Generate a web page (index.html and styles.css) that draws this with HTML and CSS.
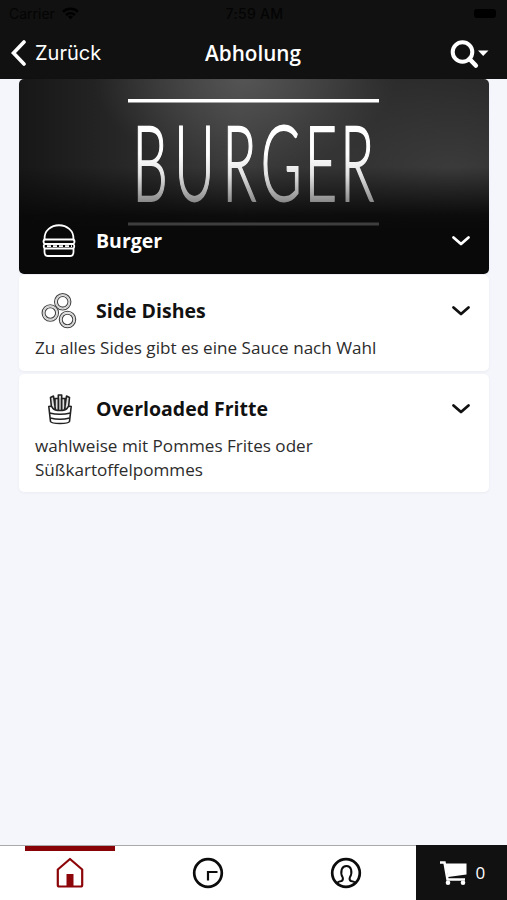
FILE: index.html
```html
<!DOCTYPE html>
<html lang="de">
<head>
<meta charset="utf-8">
<title>Abholung</title>
<link rel="stylesheet" href="styles.css">
</head>
<body>
<header class="header">
  <div class="status">
    <div class="carrier">Carrier
      <svg width="17" height="13" viewBox="0 0 17 13"><g fill="none" stroke="#000" stroke-width="2.4"><path d="M1 4.8C5.300 .8 11.700 .8 16 4.800"/><path d="M4 8c2.600-2.400 6.400-2.400 9 0"/></g><path d="M6 9.500q2.500-2 5 0L8.500 12.500z"/></svg>
    </div>
    <div class="time">7:59 AM</div>
    <div class="battery"><span class="cell"></span></div>
  </div>
  <nav class="nav">
    <div class="back">
      <svg width="15" height="26" viewBox="0 0 15 26"><path d="M13 2 2.500 13 13 24" fill="none" stroke="#fff" stroke-width="3.600" stroke-linecap="round"/></svg>
      <span>Zurück</span>
    </div>
    <h1 class="title">Abholung</h1>
    <div class="search">
      <svg width="39" height="29" viewBox="0 0 39 29"><circle cx="12.500" cy="12" r="9.800" fill="none" stroke="#fff" stroke-width="4"/><path d="m19.500 19 6.300 6.500" stroke="#fff" stroke-width="4.600" stroke-linecap="round"/><path d="M28 10.500h10.500L33.200 16z" fill="#fff"/></svg>
    </div>
  </nav>
</header>
<main class="menu">
  <section class="card hero">
    <svg class="banner" width="470" height="195" viewBox="0 0 470 195">
      <defs>
        <linearGradient id="fade" gradientUnits="userSpaceOnUse" x1="0" y1="75" x2="0" y2="126"><stop offset="0" stop-color="#fff"/><stop offset=".4" stop-color="#e4e4e4"/><stop offset="1" stop-color="#808080"/></linearGradient>
      </defs>
      <path d="M109 21.700h251" stroke="#fff" stroke-width="3.600"/>
      <path d="M109 145h251" stroke="#3e3e3e" stroke-width="3.200"/>
      <text class="lettering" transform="scale(.53 1)" x="214 293 384 456 539 606" y="122" fill="url(#fade)" stroke="url(#fade)">BURGER</text>
    </svg>
    <div class="row">
      <svg class="icon" width="36" height="34" viewBox="0 0 36 34"><g fill="none" stroke="#fff" stroke-width="1.800"><path d="M3.500 15.500C2.500-3.500 33.500-3.500 32.500 15.500z"/><path d="M3.500 15.500q-2 2 0 4.500h29q2-2.500 0-4.500M3.500 20q-1.500 2 0 4.500h29q1.500-2.500 0-4.500M3.500 24.500v3.500q0 4 3.500 4h22q3.500 0 3.500-4v-3.500"/><path d="M6 22.200h25" stroke-dasharray="4 2"/></g></svg>
      <h2>Burger</h2>
      <svg class="chevron" width="20" height="12" viewBox="0 0 20 12"><path d="m2.500 2.500 7.500 6.500 7.500-6.500"/></svg>
    </div>
  </section>
  <section class="card side">
    <div class="row">
      <svg class="icon" width="36" height="36" viewBox="0 0 36 36"><g fill="none" stroke="#444" stroke-width="1.100"><circle cx="21.700" cy="8.800" r="8.200"/><circle cx="21.700" cy="8.800" r="5.300"/><circle cx="21.700" cy="8.800" r="6.800" stroke="#ccc"/><circle cx="9.300" cy="20" r="8.200"/><circle cx="9.300" cy="20" r="5.300"/><circle cx="9.300" cy="20" r="6.800" stroke="#ccc"/><circle cx="26.500" cy="26.500" r="8.200"/><circle cx="26.500" cy="26.500" r="5.300"/><circle cx="26.500" cy="26.500" r="6.800" stroke="#ccc"/></g></svg>
      <h2>Side Dishes</h2>
      <svg class="chevron" width="20" height="12" viewBox="0 0 20 12"><path d="m2.500 2.500 7.500 6.500 7.500-6.500"/></svg>
    </div>
    <p>Zu alles Sides gibt es eine Sauce nach Wahl</p>
  </section>
  <section class="card fries">
    <div class="row">
      <svg class="icon" width="36" height="32" viewBox="0 0 36 32"><g fill="#ddd" stroke="#222" stroke-width="1.600" stroke-linejoin="round"><path d="M9.500 15 8.500 4.500l3-1.500 2 14M26.500 15l1-10.500-3-1.500-2 14M13 17V5.500h3.500V18M23 17V5.500h-3.500V18M16.300 18V2h3.400v16"/><path d="M6.800 13.500q3.200-1 4.200 2 1.500 2 7 2t7-2q1-3 4.200-2L27.500 28.500q-1 2-9.500 2t-9.500-2z" fill="#fff"/><path d="M7.500 20q10.500 2.500 21 0M8.300 25q9.700 2.500 19.400 0" fill="none"/></g></svg>
      <h2>Overloaded Fritte</h2>
      <svg class="chevron" width="20" height="12" viewBox="0 0 20 12"><path d="m2.500 2.500 7.500 6.500 7.500-6.500"/></svg>
    </div>
    <p>wahlweise mit Pommes Frites oder<br>Süßkartoffelpommes</p>
  </section>
</main>
<footer class="tabs">
  <div class="tab active"><svg width="30" height="32" viewBox="0 0 30 32"><path d="M2.800 12.500 15 2l12.200 10.500V28q0 1.500-1.500 1.500H4.300q-1.500 0-1.500-1.500z" fill="none" stroke="#8c0508" stroke-width="2.200" stroke-linejoin="round"/><path d="M11.500 29.500V17h7v12.500z" fill="#8c0508"/></svg></div>
  <div class="tab"><svg width="32" height="32" viewBox="0 0 32 32"><g fill="none" stroke="#0c0c0c"><circle cx="16" cy="16" r="13.800" stroke-width="2.700"/><path d="M16 23.500V15h9.500" stroke-width="2.200"/></g></svg></div>
  <div class="tab"><svg width="32" height="32" viewBox="0 0 32 32"><g fill="none" stroke="#0c0c0c"><circle cx="16" cy="16" r="13.800" stroke-width="2.700"/><path d="M7 26q1-1.500 4.500-2 2-1 1.200-3.500Q10.500 17 11.700 12.500q1.300-3.500 4.800-3.500t4.600 3.500q1 4.500-1.300 8-.8 2.500 1.200 3.500 3.500.5 4.500 2" stroke-width="2"/></g></svg></div>
  <div class="cart">
    <svg width="29" height="26" viewBox="0 0 29 26"><g fill="#fff"><path d="M6 3.500h21.500V14.500L9 17z"/><circle cx="9" cy="22.800" r="2.300"/><circle cx="24" cy="22.800" r="2.300"/></g><path d="M1 2.500h4.500L8.500 19.500H26" fill="none" stroke="#fff" stroke-width="2.500"/></svg>
    <span>0</span>
  </div>
</footer>
</body>
</html>
```
FILE: styles.css
```css
* { box-sizing: border-box; }
body {
  margin: 0;
  height: 900px;
  display: flex;
  flex-direction: column;
  background: #f4f6fb;
  font-family: "Open Sans", sans-serif;
  color: #111;
  overflow: hidden;
}
svg { display: block; flex: none; }
.header { height: 79px; background: #111; flex: none; }
.status {
  height: 27px;
  padding: 0 11px 0 9px;
  display: grid;
  grid-template-columns: 1fr auto 1fr;
  align-items: center;
  color: #040404;
  font: 14px Inter, sans-serif;
}
.carrier { display: flex; align-items: center; gap: 7px; }
.time { font-weight: 500; padding-left: 4px; letter-spacing: .3px; }
.battery { display: flex; justify-content: flex-end; }
.cell { width: 22px; height: 9px; border-radius: 3px; background: #000; }
.nav {
  height: 52px;
  padding: 0 18px 0 11px;
  display: grid;
  grid-template-columns: 1fr auto 1fr;
  align-items: center;
  color: #fff;
}
.back { display: flex; align-items: center; gap: 9px; font: 20px Inter, sans-serif; }
.title { margin: 0; padding-left: 6px; font-size: 20.700px; font-weight: 600; line-height: 28px; }
.search { display: flex; justify-content: flex-end; padding-top: 3px; }
.menu { flex: 1; padding: 0 18px 0 19px; }
.card { border-radius: 5px; background: #fff; box-shadow: 0 1px 3px #0000000c; }
.hero {
  height: 195px;
  margin-bottom: 1px;
  display: grid;
  align-items: end;
  overflow: hidden;
  color: #fff;
  background:
    linear-gradient(#0000 45%, #080808e8 70%, #090909 78%),
    radial-gradient(ellipse 150px 90px at 48% 0, #606060aa, #0000),
    radial-gradient(ellipse 180px 100px at 92% 47%, #3b3b3b, #0000),
    linear-gradient(90deg, #171717, #292929 25%, #3c3c3c 47%, #2c2c2c 75%, #292929);
}
.hero > * { grid-area: 1 / 1; }
.hero .row { padding-bottom: 16px; }
.lettering { font: 300 105px Lato, sans-serif; stroke-width: 1.800px; }
.row { display: grid; grid-template-columns: 36px 1fr 20px; column-gap: 19px; align-items: center; padding: 0 18px 0 22px; }
.icon { justify-self: center; }
.fries .icon { margin-left: 2px; }
.row h2 { margin: 0; font-size: 19.500px; font-weight: 700; line-height: 28px; }
.chevron path { fill: none; stroke: currentColor; stroke-width: 2.800; stroke-linecap: round; stroke-linejoin: round; }
.side { height: 96px; padding-top: 18px; margin-bottom: 3px; }
.fries { height: 118px; padding-top: 19px; }
.card p { margin: 0; padding-left: 16px; font-size: 17.100px; line-height: 23px; color: #2c2c2c; }
.side p { margin-top: 7px; }
.card.fries p { margin-top: 9px; line-height: 23.500px; }
.tabs {
  height: 55px;
  flex: none;
  display: grid;
  grid-template-columns: repeat(3, 138.500px) 1fr;
  background: #fff;
  border-top: 1px solid #aaa;
}
.tab { display: grid; place-items: center; }
.active { padding-left: 2px; background: linear-gradient(#870307, #870307) 25px 0 / 90px 5px no-repeat; }
.cart { margin-top: -1px; display: flex; align-items: center; gap: 8px; padding-left: 23px; background: #111; color: #fff; font: 17px "Open Sans", sans-serif; }
```
